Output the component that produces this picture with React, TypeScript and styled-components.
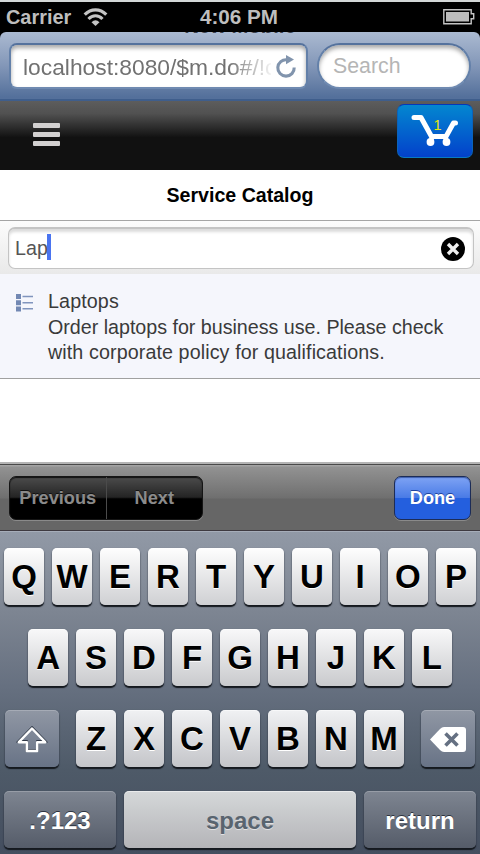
import React from "react";
import styled, { createGlobalStyle, css } from "styled-components";

const Global = createGlobalStyle`
  * { box-sizing: border-box; }
  body { margin: 0; background: #fff; }
`;

const Phone = styled.main`
  width: 480px;
  height: 854px;
  overflow: hidden;
  display: flex;
  flex-direction: column;
  background: #fff;
  font-family: "Liberation Sans", Arial, Helvetica, sans-serif;
`;

const StatusBar = styled.header`
  flex: none;
  height: 32px;
  border-top: 2px solid #d3d7d7;
  background: #000;
  color: #bebebe;
  display: grid;
  grid-template-columns: 1fr auto 1fr;
  align-items: center;
  padding: 0 5px 0 6px;
  font-weight: bold;
  font-size: 19.9px;
  line-height: 30px;
`;

const Carrier = styled.div`
  display: flex;
  align-items: center;
  gap: 12px;
`;

const Clock = styled.div`
  font-size: 20.7px;
  padding-right: 3px;
`;

const Battery = styled.div`
  display: flex;
  justify-content: flex-end;
`;

const BrowserBar = styled.nav`
  flex: none;
  height: 69px;
  background: linear-gradient(#abbad1, #8397b8 50%, #54709b 97%);
  border-bottom: 2px solid #3f5e8c;
  border-radius: 6px 6px 0 0;
  box-shadow: 0 -8px 0 #000;
  clip-path: inset(-1px 0 0 0);
  display: flex;
  align-items: flex-start;
  gap: 9px;
  padding: 11px 9px 0;
`;

const HiddenTitle = styled.div`
  position: absolute;
  left: 140px;
  top: 0;
  width: 200px;
  height: 2px;
  overflow: hidden;
  display: flex;
  align-items: flex-end;
  justify-content: center;
  color: #3a414e;
  font-size: 20.3px;
  font-weight: bold;
  line-height: 15px;
`;

const BrowserArea = styled.div`
  flex: none;
  position: relative;
  background: #000;
`;

const Field = styled.div<{ $round?: boolean }>`
  height: 46px;
  border: 2px solid #4f6f9d;
  border-color: #55729d #6380a9 #6f8ab1;
  background: #fff;
  box-shadow: inset 0 3px 4px rgba(0, 0, 0, 0.34);
  display: flex;
  align-items: center;
  border-radius: ${(p) => (p.$round ? "23px" : "8px")};
  width: ${(p) => (p.$round ? "154px" : "299px")};
  padding-left: ${(p) => (p.$round ? "14px" : "12px")};
  color: ${(p) => (p.$round ? "#b5b5b5" : "#717171")};
  font-size: ${(p) => (p.$round ? "21.3px" : "22.8px")};
  padding-top: 1px;
`;

const Url = styled.span`
  width: 248px;
  margin-right: 4px;
  overflow: hidden;
  white-space: nowrap;
  line-height: 30px;
  mask-image: linear-gradient(90deg, #000 205px, transparent 252px);
`;

const AppHeader = styled.header`
  flex: none;
  height: 69px;
  background: linear-gradient(#5d5d5d, #515151 18%, #111 53%);
  display: flex;
  justify-content: space-between;
  align-items: flex-start;
  padding: 3px 7px 0 33px;
`;

const Burger = styled.div`
  width: 27px;
  margin-top: 19px;
  display: grid;
  gap: 4px;
`;

const BurgerLine = styled.i`
  height: 5px;
  border-radius: 1px;
  background: #d2d0d0;
`;

const CartButton = styled.div`
  width: 76px;
  height: 54px;
  border-radius: 7px;
  border: 1px solid #0a63bb;
  border-top-color: #0638b8;
  border-bottom-color: #087ac2;
  background: linear-gradient(#0387d0, #0341cb);
`;

const PageTitle = styled.h1`
  flex: none;
  margin: 0;
  height: 51px;
  border-bottom: 1px solid #a5a5a5;
  font-size: 19.6px;
  line-height: 50px;
  text-align: center;
  color: #000;
`;

const SearchRow = styled.div`
  flex: none;
  height: 53px;
  padding: 6px 6px 5px 8px;
  background: linear-gradient(#fcfcfc, #e9e9e9);
`;

const SearchInput = styled.div`
  height: 42px;
  border: 1px solid #c4c4c4;
  border-width: 2px 1px 1px 1px;
  border-radius: 7px;
  background: #fff;
  box-shadow: inset 0 3px 3px rgba(0, 0, 0, 0.14);
  display: flex;
  align-items: center;
  padding: 0 8px 0 6px;
  color: #555;
  font-size: 19.7px;
`;

const Caret = styled.i`
  width: 4px;
  height: 26px;
  margin: 0 0 4px -1px;
  background: #4a74f0;
`;

const Clear = styled.svg`
  margin-left: auto;
`;

const Result = styled.section`
  flex: none;
  height: 105px;
  background: #f5f6fc;
  border-bottom: 1px solid #a0a0a0;
  display: flex;
  gap: 15px;
  padding: 15px 0 0 16px;
  color: #3a3a3a;
  font-size: 19.7px;
  line-height: 25.5px;
`;

const ListIcon = styled.svg`
  margin-top: 5px;
  flex: none;
`;

const ResultLine = styled.div<{ $track: number }>`
  white-space: nowrap;
  letter-spacing: ${(p) => p.$track}px;
`;

const Blank = styled.div`
  flex: 1;
`;

const Accessory = styled.div`
  flex: none;
  height: 69px;
  border-top: 2px solid #b4b4b4;
  border-bottom: 1px solid #3e3a40;
  background: linear-gradient(#494949 0 1px, #a3a3a3 1px 2px, #929292 3px, #6f6f6f 34px, #666 35px);
  display: flex;
  justify-content: space-between;
  align-items: flex-start;
  padding: 12px 9px 0;
  font-size: 18.2px;
  font-weight: bold;
  line-height: 43px;
  text-align: center;
`;

const Segments = styled.div`
  width: 194px;
  height: 44px;
  display: flex;
  overflow: hidden;
  border: 1px solid #151515;
  border-radius: 7px;
  background: linear-gradient(#4c4c4c, #242424 48%, #000 52%);
  box-shadow: 0 1px 0 #8a8a8a, inset 0 1px 1px #111;
  color: #8b8b8b;
  text-shadow: 0 -1px 0 #111;
`;

const Segment = styled.span<{ $w: number }>`
  width: ${(p) => p.$w}px;
  & + & { border-left: 1px solid #4b4b4b; }
`;

const Done = styled.div`
  width: 77px;
  height: 44px;
  border: 1px solid #1c2c57;
  border-radius: 7px;
  background: linear-gradient(#7ea3f4, #4a7be6 49%, #245fde 51%);
  box-shadow: 0 1px 0 #8a8a8a, inset 0 1px 1px #3e5cab;
  color: #fff;
  text-shadow: 0 -1px 0 #1f45a0;
`;

const Keyboard = styled.div`
  flex: none;
  height: 323px;
  border-top: 1px solid #a6adb9;
  background: linear-gradient(#9199a6, #7c8491 26%, #667080 48%, #4e5a68 74%, #444e5f);
  display: flex;
  flex-direction: column;
  gap: 24px;
  padding: 16px 4px 0;
`;

const KeyRow = styled.div`
  display: flex;
  justify-content: center;
  gap: 8.6px;
`;

type Tone = "letter" | "dark" | "space";

const Key = styled.div<{ $w?: number; $tone?: Tone; $row?: number; $gap?: "left" | "right" }>`
  width: ${(p) => p.$w ?? 39.4}px;
  height: 57px;
  flex: none;
  border-radius: 5px;
  display: flex;
  align-items: center;
  justify-content: center;
  font-weight: bold;
  font-size: 33px;
  color: #000;
  text-shadow: 0 1px 0 #fff;
  background: ${(p) =>
    ["linear-gradient(#fefefe, #cfd0d3)", "linear-gradient(#f8f8f9, #c9cacd)", "linear-gradient(#f0f1f3, #c4c5c9)"][p.$row ?? 0]};
  box-shadow: 0 2px 1px #15191f, 0 1px 2px rgba(40, 50, 65, 0.5), inset 0 1px 0 rgba(255, 255, 255, 0.5);
  ${(p) => p.$gap === "left" && "margin-left: 8.4px;"}
  ${(p) => p.$gap === "right" && "margin-right: 8.4px;"}
  ${(p) =>
    p.$tone === "dark" &&
    css`
      font-size: 24px;
      padding-top: 2px;
      color: #fff;
      text-shadow: 0 -1px 0 #2c333f;
      background: ${p.$row === 2 ? "linear-gradient(#9097a4, #687386)" : "linear-gradient(#7e8591, #555c69)"};
      box-shadow: 0 2px 1px #15191f, 0 1px 2px rgba(40, 50, 65, 0.5), inset 0 1px 0 rgba(255, 255, 255, 0.2);
    `}
  ${(p) =>
    p.$tone === "space" &&
    css`
      font-size: 24px;
      padding-top: 2px;
      color: #59646f;
      text-shadow: 0 1px 0 #e0e0e2;
      background: linear-gradient(#d5d8d9, #b4b4b8);
    `}
`;

const WifiIcon = () => (
  <svg width="25" height="18" viewBox="0 0 25 18" fill="none" stroke="#c4c4c4">
    <path d="M1.7 6.6C8 .2 17 .2 23.3 6.6" strokeWidth="3.2" />
    <path d="M5.5 11c4-4.300 10-4.300 14 0" strokeWidth="3.100" />
    <path d="M12.500 18 8.500 14.200q4-3.800 8 0z" fill="#c4c4c4" stroke="none" />
  </svg>
);

const BatteryIcon = () => (
  <svg width="32" height="16" viewBox="0 0 32 16">
    <path d="M.8 .8h27.400v4h2.500v5h-2.500v4.900H.8z" fill="none" stroke="#c4c4c4" strokeWidth="1.4" />
    <path d="M3 3h23v9.500H3z" fill="#bdbdbd" />
  </svg>
);

const ReloadIcon = () => (
  <svg width="22" height="24" viewBox="0 0 22 24">
    <path d="M12 4.800A8.200 8.200 0 1 0 19.200 12.500" fill="none" stroke="#8194ad" strokeWidth="3.100" />
    <path d="M11 0v9.200l8-4.800z" fill="#8194ad" />
  </svg>
);

const CartIcon = () => (
  <svg width="74" height="52" viewBox="0 0 74 52">
    <g fill="none" stroke="#fff" strokeWidth="5" strokeLinejoin="round" strokeLinecap="round">
      <path d="M16 12.500h7L33.500 31.500H48L55.500 18h2" />
      <path d="M34 32l-1 5M47.500 32l1 5" strokeWidth="4.500" />
    </g>
    <circle cx="32.500" cy="37" r="3.900" fill="#fff" />
    <circle cx="48.500" cy="37" r="3.900" fill="#fff" />
    <text x="35.500" y="25" fill="#e7e60b" fontSize="14.500" fontFamily="Liberation Sans, sans-serif">1</text>
  </svg>
);

const top = "QWERTYUIOP".split("");
const middle = "ASDFGHJKL".split("");
const bottom = "ZXCVBNM".split("");

export default function App() {
  return (
    <>
      <Global />
      <Phone>
        <StatusBar>
          <Carrier>Carrier <WifiIcon /></Carrier>
          <Clock>4:06 PM</Clock>
          <Battery><BatteryIcon /></Battery>
        </StatusBar>
        <BrowserArea>
          <BrowserBar>
            <Field><Url>localhost:8080/$m.do#/!c</Url><ReloadIcon /></Field>
            <Field $round>Search</Field>
          </BrowserBar>
          <HiddenTitle>New Mobile</HiddenTitle>
        </BrowserArea>
        <AppHeader>
          <Burger><BurgerLine /><BurgerLine /><BurgerLine /></Burger>
          <CartButton><CartIcon /></CartButton>
        </AppHeader>
        <PageTitle>Service Catalog</PageTitle>
        <SearchRow>
          <SearchInput>
            Lap<Caret />
            <Clear width="24" height="24" viewBox="0 0 24 24">
              <circle cx="12" cy="12" r="12" fill="#000" />
              <path d="m7 7 10 10M17 7 7 17" stroke="#eee" strokeWidth="3.4" />
            </Clear>
          </SearchInput>
        </SearchRow>
        <Result>
          <ListIcon width="17" height="18" viewBox="0 0 17 18">
            <path d="M0 0h5v5H0zM0 6.200h5v5H0zM0 12.400h5v5H0z" fill="#7288b3" />
            <path d="M6.500 2.500H17M6.500 8.700H17M6.500 14.800H17" stroke="#8094bd" strokeWidth="1.500" />
          </ListIcon>
          <div>
            <ResultLine $track={0.12}>Laptops</ResultLine>
            <ResultLine $track={-0.02}>Order laptops for business use. Please check</ResultLine>
            <ResultLine $track={0.1}>with corporate policy for qualifications.</ResultLine>
          </div>
        </Result>
        <Blank />
        <Accessory>
          <Segments><Segment $w={96}>Previous</Segment><Segment $w={97}>Next</Segment></Segments>
          <Done>Done</Done>
        </Accessory>
        <Keyboard>
          <KeyRow>{top.map((k) => <Key key={k}>{k}</Key>)}</KeyRow>
          <KeyRow>{middle.map((k) => <Key key={k} $row={1}>{k}</Key>)}</KeyRow>
          <KeyRow>
            <Key $w={54.6} $tone="dark" $row={2} $gap="right">
              <svg width="32" height="28" viewBox="0 0 32 28">
                <path d="M16 1.500 2.800 15.200H10.500v9h11v-9h7.700z" fill="none" stroke="#303947" strokeWidth="2.500" />
                <path d="M16 2.500 2.800 16.200H10.800v8.800h10.400v-8.800h8z" fill="none" stroke="#fff" strokeWidth="2.500" strokeLinejoin="round" />
              </svg>
            </Key>
            {bottom.map((k) => <Key key={k} $row={2}>{k}</Key>)}
            <Key $w={54.6} $tone="dark" $row={2} $gap="left">
              <svg width="36" height="25" viewBox="0 0 36 25">
                <path d="M0 12.500 10 2q2-2 4-2h19q3 0 3 3v19q0 3-3 3H14q-2 0-4-2z" fill="#fff" />
                <path d="m15.500 6.500 12 12M27.500 6.500l-12 12" stroke="#657082" strokeWidth="3.600" />
              </svg>
            </Key>
          </KeyRow>
          <KeyRow>
            <Key $w={111.4} $tone="dark" $row={1}>.?123</Key>
            <Key $w={231.4} $tone="space">space</Key>
            <Key $w={111.4} $tone="dark" $row={1}>return</Key>
          </KeyRow>
        </Keyboard>
      </Phone>
    </>
  );
}
